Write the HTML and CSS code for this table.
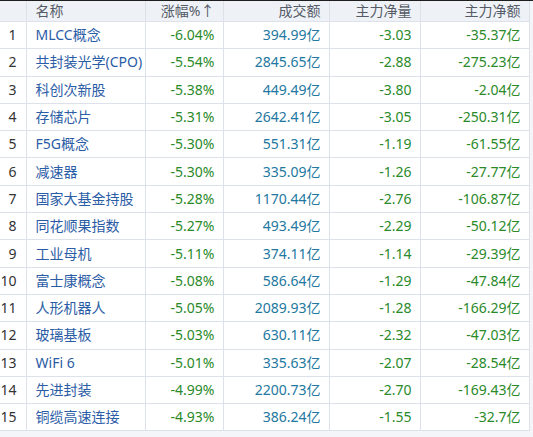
FILE: index.html
```html
<!DOCTYPE html>
<html>
	<head>
		<meta charset="utf-8" />
		<title>板块排行</title>
		<link rel="stylesheet" href="styles.css">
	</head>
	<body>
		<div class="wrap">
			<table class="rank">
				<colgroup>
					<col class="c-no"><col class="c-name"><col class="c-pct"><col class="c-amt"><col class="c-vol"><col class="c-net">
				</colgroup>
				<thead>
					<tr>
						<th></th>
						<th class="left">名称</th>
						<th>涨幅%↑</th>
						<th>成交额</th>
						<th>主力净量</th>
						<th>主力净额</th>
					</tr>
				</thead>
				<tbody>
					<tr><td>1</td><td class="name">MLCC概念</td><td class="down">-6.04%</td><td class="amt">394.99亿</td><td class="down">-3.03</td><td class="down">-35.37亿</td></tr>
					<tr><td>2</td><td class="name">共封装光学(CPO)</td><td class="down">-5.54%</td><td class="amt">2845.65亿</td><td class="down">-2.88</td><td class="down">-275.23亿</td></tr>
					<tr><td>3</td><td class="name">科创次新股</td><td class="down">-5.38%</td><td class="amt">449.49亿</td><td class="down">-3.80</td><td class="down">-2.04亿</td></tr>
					<tr><td>4</td><td class="name">存储芯片</td><td class="down">-5.31%</td><td class="amt">2642.41亿</td><td class="down">-3.05</td><td class="down">-250.31亿</td></tr>
					<tr><td>5</td><td class="name">F5G概念</td><td class="down">-5.30%</td><td class="amt">551.31亿</td><td class="down">-1.19</td><td class="down">-61.55亿</td></tr>
					<tr><td>6</td><td class="name">减速器</td><td class="down">-5.30%</td><td class="amt">335.09亿</td><td class="down">-1.26</td><td class="down">-27.77亿</td></tr>
					<tr><td>7</td><td class="name">国家大基金持股</td><td class="down">-5.28%</td><td class="amt">1170.44亿</td><td class="down">-2.76</td><td class="down">-106.87亿</td></tr>
					<tr><td>8</td><td class="name">同花顺果指数</td><td class="down">-5.27%</td><td class="amt">493.49亿</td><td class="down">-2.29</td><td class="down">-50.12亿</td></tr>
					<tr><td>9</td><td class="name">工业母机</td><td class="down">-5.11%</td><td class="amt">374.11亿</td><td class="down">-1.14</td><td class="down">-29.39亿</td></tr>
					<tr><td>10</td><td class="name">富士康概念</td><td class="down">-5.08%</td><td class="amt">586.64亿</td><td class="down">-1.29</td><td class="down">-47.84亿</td></tr>
					<tr><td>11</td><td class="name">人形机器人</td><td class="down">-5.05%</td><td class="amt">2089.93亿</td><td class="down">-1.28</td><td class="down">-166.29亿</td></tr>
					<tr><td>12</td><td class="name">玻璃基板</td><td class="down">-5.03%</td><td class="amt">630.11亿</td><td class="down">-2.32</td><td class="down">-47.03亿</td></tr>
					<tr><td>13</td><td class="name">WiFi 6</td><td class="down">-5.01%</td><td class="amt">335.63亿</td><td class="down">-2.07</td><td class="down">-28.54亿</td></tr>
					<tr><td>14</td><td class="name">先进封装</td><td class="down">-4.99%</td><td class="amt">2200.73亿</td><td class="down">-2.70</td><td class="down">-169.43亿</td></tr>
					<tr><td>15</td><td class="name">铜缆高速连接</td><td class="down">-4.93%</td><td class="amt">386.24亿</td><td class="down">-1.55</td><td class="down">-32.7亿</td></tr>
				</tbody>
			</table>
		</div>
	</body>
</html>
```

FILE: styles.css
```css
body{margin: 0;padding: 0;background: #f3f5f8;font-family: "Noto Sans","Noto Sans CJK SC",sans-serif;font-size: 14px;overflow: hidden;}

.wrap{border-top: 1px solid #1e1e1e;height: 436px;}
.rank{border-collapse: collapse;table-layout: fixed;width: 529px;background: #fff;}
.rank col.c-no{width: 26px;}
.rank col.c-name{width: 119px;}
.rank col.c-pct{width: 78px;}
.rank col.c-amt{width: 106px;}
.rank col.c-vol{width: 91px;}
.rank col.c-net{width: 109px;}

.rank th,.rank td{border: 1px solid #dde2ea;padding: 0 8px 0 0;text-align: right;white-space: nowrap;overflow: hidden;}
.rank tr > :first-child{border-left: none;}
.rank th{height: 20px;background: #eef1f6;color: #555b66;font-weight: normal;font-size: 14px;line-height: 20px;border-top: none;}
.rank td{height: 26.3px;line-height: 26px;color: #333;}
.rank td:first-child{padding-right: 9px;}
.rank th.left,.rank td.name{text-align: left;padding: 0 0 0 9px;}
.rank td.name{color: #2b5ca6;}
.rank td.amt{color: #22789f;}
.rank td.down{color: #2a8a2a;}
```
